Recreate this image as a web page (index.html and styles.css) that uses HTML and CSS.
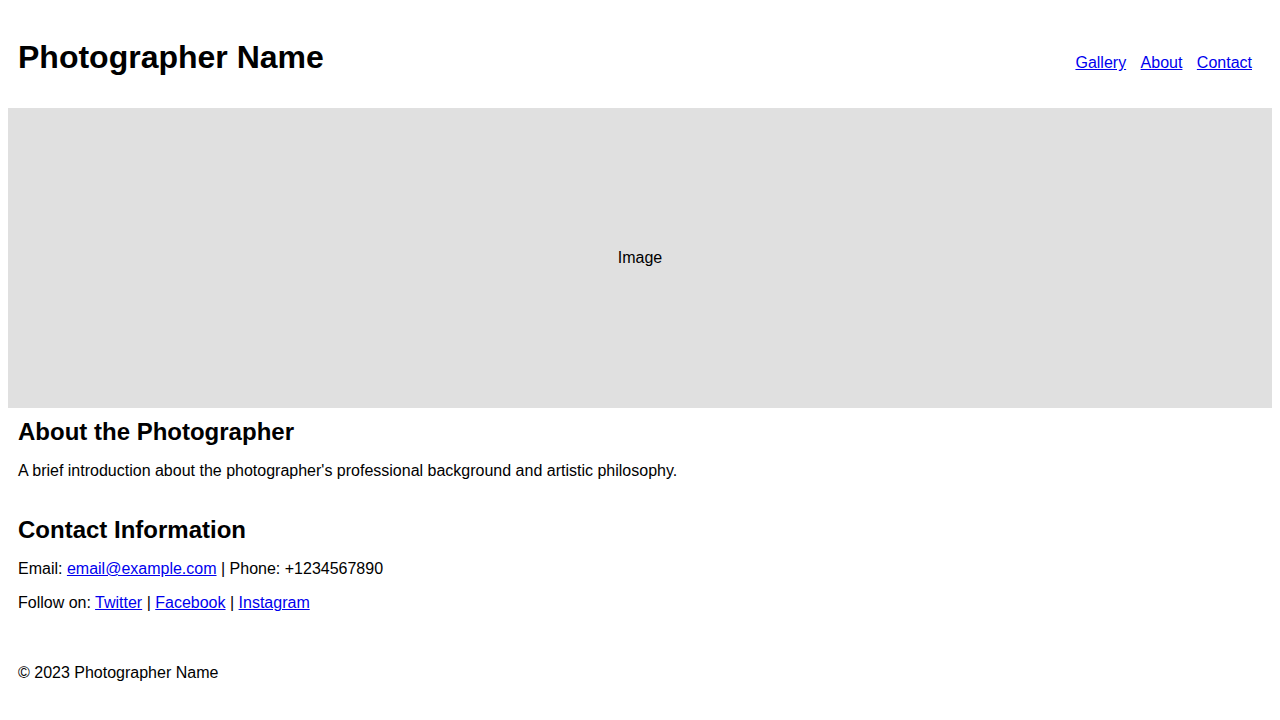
FILE: index.html
```html
<!DOCTYPE html>
<html lang="en">
<head>
<meta charset="utf-8">
<title>Photographer Name</title>
<link rel="stylesheet" href="styles.css">
</head>
<body>
<header class="site-header">
  <h1 class="site-title">Photographer Name</h1>
  <nav class="site-nav">
    <ul class="nav-list">
      <li><a href="#gallery">Gallery</a></li>
      <li><a href="#about">About</a></li>
      <li><a href="#contact">Contact</a></li>
    </ul>
  </nav>
</header>
<div class="hero">Image</div>
<section class="section" id="about">
  <h2 class="section-title">About the Photographer</h2>
  <p>A brief introduction about the photographer's professional background and artistic philosophy.</p>
</section>
<section class="section" id="contact">
  <h2 class="section-title">Contact Information</h2>
  <p>Email: <a href="#">email@example.com</a> | Phone: +1234567890</p>
  <p>Follow on: <a href="#">Twitter</a> | <a href="#">Facebook</a> | <a href="#">Instagram</a></p>
</section>
<footer class="site-footer">
  <p>© 2023 Photographer Name</p>
</footer>
</body>
</html>
```
FILE: styles.css
```css
body {
  margin: 8px;
  font-family: "Liberation Sans", Arial, sans-serif;
  font-size: 16px;
  color: #000;
  background: #fff;
}
a { color: #0000ee; }
.site-header {
  display: flex;
  justify-content: space-between;
  align-items: baseline;
  padding: 10px;
}
.site-title {
  font-size: 32px;
  margin: 21.44px 0;
}
.nav-list {
  list-style: none;
  margin: 0;
  padding: 0;
}
.nav-list li {
  display: inline;
  margin-right: 10px;
}
.hero {
  height: 300px;
  line-height: 300px;
  text-align: center;
  background: #e0e0e0;
}
.section {
  padding: 10px;
}
.section-title {
  font-size: 24px;
  margin: 0;
}
.section p {
  margin: 16px 0;
}
.site-footer {
  padding: 10px;
}
.site-footer p {
  margin: 16px 0;
}
```
